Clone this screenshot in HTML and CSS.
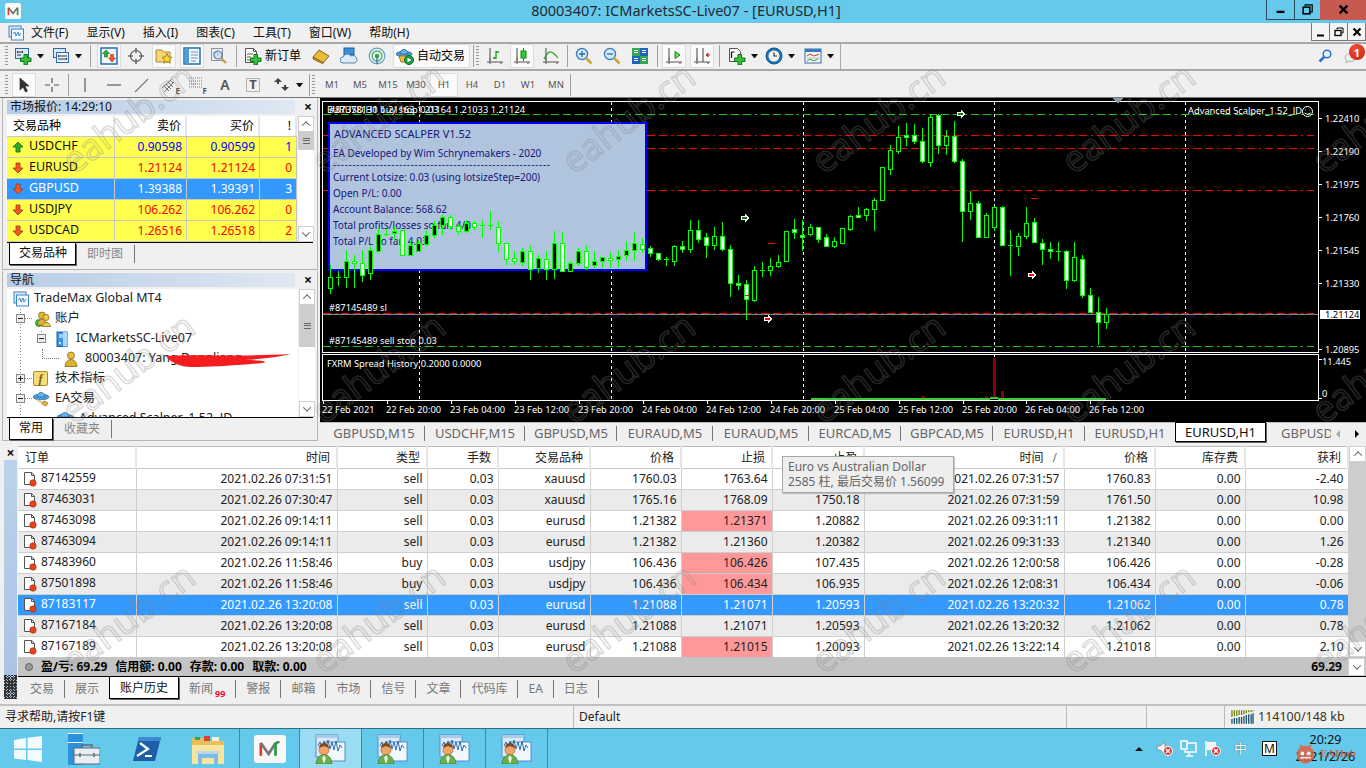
FILE: index.html
```html
<!DOCTYPE html>
<html lang="zh-CN">
<head>
<meta charset="utf-8">
<title>80003407: ICMarketsSC-Live07 - [EURUSD,H1]</title>
<link rel="stylesheet" href="styles.css">
</head>
<body>
<svg class="defs" aria-hidden="true">
  <symbol id="plus" viewBox="0 0 18 18"><path d="M10 7.5h3.5V11H17v3.500h-3.500V18H10v-3.500H6.500V11H10z" fill="#38c238" stroke="#0c7418"/></symbol>
  <symbol id="i-newchart" viewBox="0 0 18 18"><rect x="1.500" y="1.500" width="13" height="10" fill="#dce9f8" stroke="#2b6cb0"/><path d="M3 5h6M3 8h4M3 5l1-1M3 5l1 1M9 5L8 4M9 5L8 6" stroke="#334" fill="none"/><use href="#plus"/></symbol>
  <symbol id="i-profiles" viewBox="0 0 18 18"><rect x="1.500" y="1.500" width="12" height="9" fill="#dce9f8" stroke="#2b6cb0"/><rect x="4.500" y="5.500" width="12" height="10" fill="#e9f2fb" stroke="#2b6cb0"/><path d="M6 9h9M6 12h9M6 9l1-1M6 9l1 1M15 12l-1-1M15 12l-1 1" stroke="#334" fill="none"/></symbol>
  <symbol id="i-mw" viewBox="0 0 18 18"><rect x="1" y="1" width="16" height="16" fill="#eef5fc" stroke="#1f6fb8" stroke-width="1.500"/><path d="M6 3l3.500 3.500H7.500V10h-3V6.500H2.500z" fill="#33b033" stroke="#0b6b0b" stroke-width=".6"/><path d="M10.500 7.500h3V11h2L12 15l-3.500-4h2z" fill="#f25a2a" stroke="#a83008" stroke-width=".6"/></symbol>
  <symbol id="i-cross" viewBox="0 0 18 18"><circle cx="9" cy="9" r="5.500" fill="none" stroke="#555" stroke-width="1.200"/><path d="M9 1v5M9 12v5M1 9h5M12 9h5" stroke="#444" stroke-width="1.200"/></symbol>
  <symbol id="i-fav" viewBox="0 0 18 18"><path d="M1 3h6l1.500 2H15v10H1z" fill="#f6d873" stroke="#b08a2a"/><path d="M12 6.500l1.600 3.400 3.400.4-2.500 2.400.7 3.500-3.200-1.800-3.200 1.800.7-3.500L7 10.300l3.400-.4z" fill="#fbd640" stroke="#a9801b"/></symbol>
  <symbol id="i-nav" viewBox="0 0 18 18"><rect x="1" y="1" width="16" height="16" fill="#f4f9ff" stroke="#1f6fb8" stroke-width="1.500"/><rect x="2" y="2" width="4" height="14" fill="#4f9be0"/><path d="M8 5h7M8 8h7M8 11h7M8 14h5" stroke="#6b8db3"/></symbol>
  <symbol id="i-look" viewBox="0 0 18 18"><rect x="1.500" y="1.500" width="11" height="12" fill="#eef1f5" stroke="#8b94a0"/><path d="M3 6h3l1-2 1 5 1-3h2" stroke="#6384a8" fill="none"/><circle cx="8" cy="8" r="4" fill="#cfe3f6" fill-opacity=".7" stroke="#5a7ea8" stroke-width="1.200"/><path d="M11 11l5 5" stroke="#c79a3a" stroke-width="2.200"/></symbol>
  <symbol id="i-order" viewBox="0 0 18 18"><path d="M1.500 1.500h8l3 3v11h-11z" fill="#fff" stroke="#555"/><path d="M9.500 1.500v3h3M3 7h6M3 10h4M3 13h3" stroke="#555" fill="none"/><use href="#plus"/></symbol>
  <symbol id="i-book" viewBox="0 0 18 18"><path d="M1 10L7 3l10 6-6 7z" fill="#e8bb3a" stroke="#8a6212"/><path d="M1 10v2l10 5v-1.500z" fill="#c08a22" stroke="#8a6212" stroke-width=".7"/></symbol>
  <symbol id="i-people" viewBox="0 0 18 18"><rect x="4" y="1" width="10" height="7" fill="#3d8fdb" stroke="#1d5f9e"/><path d="M4 8h10v3H4z" fill="#7fb9ec" stroke="#1d5f9e" stroke-width=".7"/><path d="M3 16a3 3 0 010-6 4.500 4.500 0 018-1 3.500 3.500 0 014 7z" fill="#dceaf5" stroke="#5a86ad"/></symbol>
  <symbol id="i-signal" viewBox="0 0 18 18"><circle cx="9" cy="9" r="7.800" fill="#e8f2ee" stroke="#6ea0c8" stroke-width="1.200"/><circle cx="9" cy="9" r="5" fill="none" stroke="#58b06a" stroke-width="1.300"/><circle cx="9" cy="9" r="2.300" fill="#3da45a"/><path d="M9 9v8" stroke="#3d7fb8" stroke-width="1.500"/></symbol>
  <symbol id="i-auto" viewBox="0 0 18 18"><ellipse cx="8" cy="7" rx="8" ry="2.500" fill="#4f9fdc" stroke="#2a6ba3"/><path d="M4 7a4 4.500 0 018 0z" fill="#6db5e8" stroke="#2a6ba3"/><path d="M3 9h9l-2 6H5z" fill="#eec04c" stroke="#a37b1c"/><circle cx="13" cy="13" r="4.500" fill="#1f9c3f" stroke="#0c6a24"/><path d="M11.500 10.800l4 2.200-4 2.200z" fill="#fff"/></symbol>
  <symbol id="i-bar" viewBox="0 0 18 18"><path d="M4 1v14M1 15h16" stroke="#555" stroke-width="1.100" fill="none"/><path d="M3 12h2M15 15v2M4 15v2" stroke="#555"/><path d="M10 4v8M10 5h3M10 11H7" stroke="#0da00d" stroke-width="1.300" fill="none"/></symbol>
  <symbol id="i-candle" viewBox="0 0 18 18"><path d="M4 1v14M1 15h16" stroke="#555" stroke-width="1.100" fill="none"/><path d="M3 12h2M15 15v2M4 15v2" stroke="#555"/><path d="M10.500 1v13" stroke="#0a8a0a"/><rect x="8" y="4" width="5" height="7" fill="#2ecc2e" stroke="#0a8a0a"/></symbol>
  <symbol id="i-line" viewBox="0 0 18 18"><path d="M4 1v14M1 15h16" stroke="#555" stroke-width="1.100" fill="none"/><path d="M3 12h2M15 15v2M4 15v2" stroke="#555"/><path d="M2 12q4-8 7-7t7 6" stroke="#18a018" stroke-width="1.100" fill="none"/></symbol>
  <symbol id="i-zoomin" viewBox="0 0 18 18"><circle cx="7" cy="7" r="5.500" fill="#d7ebfb" stroke="#3d7fc0" stroke-width="1.400"/><path d="M4 7h6M7 4v6" stroke="#2a68a8" stroke-width="1.300"/><path d="M11 11l5.500 5.500" stroke="#cfa23a" stroke-width="2.500"/></symbol>
  <symbol id="i-zoomout" viewBox="0 0 18 18"><circle cx="7" cy="7" r="5.500" fill="#d7ebfb" stroke="#3d7fc0" stroke-width="1.400"/><path d="M4 7h6" stroke="#2a68a8" stroke-width="1.300"/><path d="M11 11l5.500 5.500" stroke="#cfa23a" stroke-width="2.500"/></symbol>
  <symbol id="i-tile" viewBox="0 0 18 18"><rect x="1" y="1" width="8" height="8" fill="#34a853"/><rect x="9" y="1" width="8" height="8" fill="#1f62c4"/><rect x="1" y="9" width="8" height="8" fill="#1f62c4"/><rect x="9" y="9" width="8" height="8" fill="#34a853"/><path d="M3 3.500h4M3 5.500h4M11 3.500h4M11 5.500h4M3 11.500h4M3 13.500h4M11 11.500h4M11 13.500h4" stroke="#fff"/></symbol>
  <symbol id="i-scroll" viewBox="0 0 18 18"><path d="M4 1v14M1 15h16" stroke="#555" stroke-width="1.100" fill="none"/><path d="M3 12h2M15 15v2M4 15v2" stroke="#555"/><path d="M10 4.500l5 3.500-5 3.500z" fill="#6ed86e" stroke="#0a8a0a"/></symbol>
  <symbol id="i-shift" viewBox="0 0 18 18"><path d="M4 1v14M1 15h16M10 1v14" stroke="#555" stroke-width="1.100" fill="none"/><path d="M3 12h2M15 15v2M4 15v2" stroke="#555"/><path d="M17 8h-4M13 8l2-2v4z" stroke="#c33" fill="#c33"/></symbol>
  <symbol id="i-templ" viewBox="0 0 18 18"><path d="M1.500 1.500h8l3 3v10h-11z" fill="#f6f6f6" stroke="#555"/><path d="M3.500 5h3M3.500 5v6" stroke="#111" stroke-width="1.200"/><use href="#plus"/></symbol>
  <symbol id="i-clock" viewBox="0 0 18 18"><circle cx="9" cy="9" r="8" fill="#1c74bb" stroke="#0e4f88"/><circle cx="9" cy="9" r="5.500" fill="#f6f3e6"/><path d="M9 5.500V9h3" stroke="#333" stroke-width="1.200" fill="none"/></symbol>
  <symbol id="i-tpl" viewBox="0 0 18 18"><rect x="1" y="2" width="16" height="14" fill="#f2f4f7" stroke="#3a6ea5"/><rect x="1" y="2" width="16" height="3" fill="#3a78bd"/><path d="M3 9q3-3 5-1t7-1" stroke="#c33" fill="none"/><path d="M3 14q3-3 5-1t7-2" stroke="#2a9a2a" fill="none"/><path d="M3 11h12" stroke="#bbb"/></symbol>
  <symbol id="i-arrow" viewBox="0 0 18 18"><path d="M5 2v12l3-3 2.500 5 2-1-2.500-5h4z" fill="#333" stroke="#222" stroke-width=".6"/></symbol>
  <symbol id="i-crosshair" viewBox="0 0 18 18"><path d="M9 2v5M9 11v5M2 9h5M11 9h5" stroke="#555" stroke-width="1.200"/></symbol>
  <symbol id="i-vline" viewBox="0 0 18 18"><path d="M9 2v14" stroke="#666" stroke-width="1.300"/></symbol>
  <symbol id="i-hline" viewBox="0 0 18 18"><path d="M2 9h14" stroke="#666" stroke-width="1.300"/></symbol>
  <symbol id="i-dline" viewBox="0 0 18 18"><path d="M3 16L16 3" stroke="#777" stroke-width="1.100"/></symbol>
  <symbol id="i-chan" viewBox="0 0 18 18"><path d="M1 12L11 3M3 16L13 6M3 10l5 5M5 8l5 5M7 6l5 5M9 4l3 3" stroke="#666" stroke-width=".9"/></symbol>
  <symbol id="i-fib" viewBox="0 0 18 18"><path d="M1 2h13M1 5h13M1 8h13M1 11h13" stroke="#777" stroke-dasharray="1 1"/></symbol>
  <symbol id="i-tbox" viewBox="0 0 18 18"><rect x="2.500" y="2.500" width="13" height="13" fill="none" stroke="#777" stroke-dasharray="1 1"/></symbol>
  <symbol id="i-shapes" viewBox="0 0 18 18"><path d="M1 6l4-4 4 4H6v2H4V6zM8 11h3V9h2v2h3l-4 4z" fill="#444"/></symbol>
  <symbol id="i-up" viewBox="0 0 12 12"><path d="M6 1l5 5H8v5H4V6H1z" fill="#2fa82f" stroke="#0b6b0b" stroke-width=".8"/></symbol>
  <symbol id="i-down" viewBox="0 0 12 12"><path d="M4 1h4v5h3l-5 5-5-5h3z" fill="#f25a2a" stroke="#a83008" stroke-width=".8"/></symbol>
  <symbol id="i-doc" viewBox="0 0 14 16"><path d="M1.500 1.500h7l3 3v9h-10z" fill="#fff" stroke="#555"/><path d="M8.500 1.500v3h3" fill="none" stroke="#555"/><circle cx="10" cy="12" r="3.200" fill="#e8431a" stroke="#a12b0a" stroke-width=".6"/></symbol>
  <symbol id="i-root" viewBox="0 0 16 16"><rect x="1" y="1" width="12" height="11" fill="#d8e8fa" stroke="#3d86c8"/><rect x="3.500" y="4" width="12" height="11" fill="#f4f9ff" stroke="#3d86c8"/><path d="M5 9l2-2 1 4 2-4 1 4 2-3" stroke="#3d86c8" fill="none"/></symbol>
  <symbol id="i-users" viewBox="0 0 18 16"><circle cx="6" cy="12" r="3.500" fill="#3bbf3b" stroke="#0c7a18" stroke-width=".7"/><circle cx="9" cy="4.500" r="3.500" fill="#e4b536" stroke="#8b6a12" stroke-width=".8"/><path d="M4.500 14a4.500 5.500 0 019 0z" fill="#e4b536" stroke="#8b6a12" stroke-width=".8"/><circle cx="13" cy="6.500" r="3" fill="#f0c84a" stroke="#8b6a12" stroke-width=".8"/><path d="M9 15.500a4.500 6 0 018.500 0z" fill="#f0c84a" stroke="#8b6a12" stroke-width=".8"/></symbol>
  <symbol id="i-server" viewBox="0 0 14 16"><rect x="2" y="1" width="10" height="14.500" fill="#3a96e0" stroke="#18609e"/><path d="M4 4h6M4 6h6" stroke="#fff"/><rect x="8" y="1" width="4" height="14.500" fill="#a8d8f8"/><circle cx="5" cy="12" r="1" fill="#fff"/></symbol>
  <symbol id="i-user" viewBox="0 0 14 16"><circle cx="7" cy="4.500" r="3.500" fill="#e9bc3e" stroke="#8b6a12" stroke-width=".8"/><path d="M1 15.500a6 7 0 0112 0z" fill="#e0b030" stroke="#8b6a12" stroke-width=".8"/></symbol>
  <symbol id="i-hat" viewBox="0 0 18 16"><ellipse cx="8" cy="6" rx="8" ry="2.800" fill="#4f9fdc" stroke="#2a6ba3" stroke-width=".8"/><path d="M4 6a4 4.500 0 018 0z" fill="#6db5e8" stroke="#2a6ba3" stroke-width=".8"/><path d="M4 8l6 3-1 2-5-3z" fill="#e2c874"/><path d="M11 10l4 2-2 3-4-2z" fill="#e8bb3a" stroke="#8a6212" stroke-width=".7"/></symbol>
  <symbol id="i-mark" viewBox="0 0 8 8"><path d="M.5 2.500h3.500V.5L7.500 4 4 7.500V5.500H.5z" stroke="#fff"/></symbol>
  <symbol id="i-task" viewBox="0 0 31 30"><rect x="1" y="1" width="22" height="22" fill="#dbe9f7" stroke="#4f8fc8"/><rect x="1" y="1" width="22" height="3" fill="#a9cbea"/><rect x="10" y="8" width="20" height="19" fill="#f1f7fd" stroke="#4f8fc8"/><path d="M3 12l2-4 2 6 2-7 2 8 2-9 2 9 2-7 2 8 2-9 2 10 2-6 2 3" stroke="#2d6db0" fill="none"/><circle cx="9" cy="16" r="5" fill="#f0a46b" stroke="#b06a30" stroke-width=".7"/><path d="M4 14a5 5 0 0110 0l-5-2z" fill="#7a4a1c"/><path d="M1 30a8 9.500 0 0116 0z" fill="#6ab04a" stroke="#3a7a22" stroke-width=".7"/><path d="M9 21l-2 3 2 6 2-6z" fill="#e8f0e0"/></symbol>
</svg>

<header class="titlebar">
  <div class="app-logo"><svg class="logo-m" viewBox="0 0 14 12"><path d="M1.500 11V2" stroke="#d9402e" stroke-width="2" fill="none"/><path d="M1.500 2L7 9l5.500-7" stroke="#6a6a6a" stroke-width="2" fill="none"/><path d="M12.500 2v9" stroke="#2a9a4a" stroke-width="2" fill="none"/></svg></div>
  <h1 class="title">80003407: ICMarketsSC-Live07 - [EURUSD,H1]</h1>
  <div class="winctl">
    <div class="wc wc-min"><svg class="wc-i" viewBox="0 0 14 14"><path d="M2 10h10" stroke="#000" stroke-width="3"/></svg></div>
    <div class="wc wc-res"><svg class="wc-i" viewBox="0 0 14 14"><path d="M4 3V1h9v9h-3" stroke="#000" stroke-width="1.500" fill="none"/><rect x="1.500" y="4" width="8.500" height="8.500" fill="none" stroke="#000" stroke-width="2"/></svg></div>
    <div class="wc wc-close"><svg class="wc-i" viewBox="0 0 14 14"><path d="M2 2l10 10M12 2L2 12" stroke="#000" stroke-width="3"/></svg></div>
  </div>
</header>

<nav class="menubar">
  <svg class="menu-ico"><use href="#i-root"/></svg>
  <span class="menu">文件(F)</span><span class="menu">显示(V)</span><span class="menu">插入(I)</span><span class="menu">图表(C)</span><span class="menu">工具(T)</span><span class="menu">窗口(W)</span><span class="menu">帮助(H)</span>
  <div class="mdi">
    <div class="mdi-b"><svg class="mdi-i" viewBox="0 0 10 10"><path d="M1 8.500h7" stroke="#000" stroke-width="2"/></svg></div>
    <div class="mdi-b"><svg class="mdi-i" viewBox="0 0 10 10"><path d="M3 2.500V1h6v5H7.500" stroke="#000" fill="none"/><rect x="1" y="3.500" width="6" height="5" fill="none" stroke="#000" stroke-width="1.300"/></svg></div>
    <div class="mdi-b"><svg class="mdi-i" viewBox="0 0 10 10"><path d="M1.500 1.500l7 7M8.500 1.500l-7 7" stroke="#000" stroke-width="2"/></svg></div>
  </div>
</nav>

<div class="toolbar tb1">
  <div class="tb-group">
  <span class="grip ml5"></span>
  <span class="btn ml3"><svg class="ico"><use href="#i-newchart"/></svg></span><span class="caret"></span>
  <span class="btn ml4"><svg class="ico"><use href="#i-profiles"/></svg></span><span class="caret"></span>
  <span class="sep ml7"></span>
  <span class="btn on ml6"><svg class="ico"><use href="#i-mw"/></svg></span>
  <span class="btn ml3"><svg class="ico"><use href="#i-cross"/></svg></span>
  <span class="btn on ml4"><svg class="ico"><use href="#i-fav"/></svg></span>
  <span class="btn on ml4"><svg class="ico"><use href="#i-nav"/></svg></span>
  <span class="btn ml3"><svg class="ico"><use href="#i-look"/></svg></span>
  <span class="sep ml5"></span>
  <span class="btn ml4"><svg class="ico"><use href="#i-order"/></svg></span><span class="btn-text">新订单</span>
  <span class="btn ml8"><svg class="ico"><use href="#i-book"/></svg></span>
  <span class="btn ml4"><svg class="ico"><use href="#i-people"/></svg></span>
  <span class="btn ml4"><svg class="ico"><use href="#i-signal"/></svg></span>
  <span class="btn on auto ml4"><svg class="ico"><use href="#i-auto"/></svg><span class="auto-t">自动交易</span></span>
  <span class="sep ml3"></span>
  <span class="grip ml2"></span>
  <span class="btn ml4"><svg class="ico"><use href="#i-bar"/></svg></span>
  <span class="btn on ml3"><svg class="ico"><use href="#i-candle"/></svg></span>
  <span class="btn ml5"><svg class="ico"><use href="#i-line"/></svg></span>
  <span class="sep ml4"></span>
  <span class="btn ml4"><svg class="ico"><use href="#i-zoomin"/></svg></span>
  <span class="btn ml4"><svg class="ico"><use href="#i-zoomout"/></svg></span>
  <span class="btn ml4"><svg class="ico"><use href="#i-tile"/></svg></span>
  <span class="sep ml5"></span>
  <span class="btn on ml4"><svg class="ico"><use href="#i-scroll"/></svg></span>
  <span class="btn on ml4"><svg class="ico"><use href="#i-shift"/></svg></span>
  <span class="sep ml5"></span>
  <span class="btn ml5"><svg class="ico"><use href="#i-templ"/></svg></span><span class="caret"></span>
  <span class="btn ml3"><svg class="ico"><use href="#i-clock"/></svg></span><span class="caret"></span>
  <span class="btn ml5"><svg class="ico"><use href="#i-tpl"/></svg></span><span class="caret"></span>
  </div>
  <div class="tb-right">
    <svg class="search" viewBox="0 0 14 14"><circle cx="9" cy="5" r="3.800" fill="#e8f2fc" stroke="#2a6fd0" stroke-width="1.500"/><path d="M6 8l-4.500 4.500" stroke="#2a6fd0" stroke-width="2.500"/></svg>
    <div class="chat"><svg class="chat-b" viewBox="0 0 14 12"><path d="M1 5a6 4.500 0 0112 0 6 4.500 0 01-8 4l-3 2 1-3a4 4 0 01-2-3z" fill="#eee" stroke="#aaa"/></svg><span class="badge">1</span></div>
  </div>
</div>

<div class="toolbar tb2">
  <span class="grip ml5"></span>
  <span class="btn on ml4"><svg class="ico"><use href="#i-arrow"/></svg></span>
  <span class="btn ml4"><svg class="ico"><use href="#i-crosshair"/></svg></span>
  <span class="sep ml4"></span>
  <span class="btn ml4"><svg class="ico"><use href="#i-vline"/></svg></span>
  <span class="btn ml5"><svg class="ico"><use href="#i-hline"/></svg></span>
  <span class="btn ml3"><svg class="ico"><use href="#i-dline"/></svg></span>
  <span class="btn tag ml5"><svg class="ico"><use href="#i-chan"/></svg><span class="tag-t">E</span></span>
  <span class="btn tag ml3"><svg class="ico"><use href="#i-fib"/></svg><span class="tag-t">F</span></span>
  <span class="btn glyph ml4">A</span>
  <span class="btn tbox ml4"><svg class="ico"><use href="#i-tbox"/></svg><span class="tbox-t">T</span></span>
  <span class="btn ml5"><svg class="ico"><use href="#i-shapes"/></svg></span><span class="caret"></span>
  <span class="sep ml5"></span>
  <span class="grip ml2"></span>
  <span class="per ml3">M1</span><span class="per">M5</span><span class="per">M15</span><span class="per">M30</span><span class="per on">H1</span><span class="per">H4</span><span class="per">D1</span><span class="per">W1</span><span class="per">MN</span>
  <span class="sep"></span>
</div>

<main class="workspace">
  <aside class="side">
    <section class="panel mw">
      <div class="panel-title"><span>市场报价: 14:29:10</span><span class="pclose">×</span></div>
      <div class="mw-body">
        <div class="mw-table">
          <div class="mw-row mw-head"><span class="c-name">交易品种</span><span>卖价</span><span>买价</span><span>!</span></div>
          <div class="mw-row up"><span class="c-name"><svg class="arr"><use href="#i-up"/></svg>USDCHF</span><span>0.90598</span><span>0.90599</span><span>1</span></div>
          <div class="mw-row dn"><span class="c-name"><svg class="arr"><use href="#i-down"/></svg>EURUSD</span><span>1.21124</span><span>1.21124</span><span>0</span></div>
          <div class="mw-row sel"><span class="c-name"><svg class="arr"><use href="#i-down"/></svg>GBPUSD</span><span>1.39388</span><span>1.39391</span><span>3</span></div>
          <div class="mw-row dn"><span class="c-name"><svg class="arr"><use href="#i-down"/></svg>USDJPY</span><span>106.262</span><span>106.262</span><span>0</span></div>
          <div class="mw-row dn"><span class="c-name"><svg class="arr"><use href="#i-down"/></svg>USDCAD</span><span>1.26516</span><span>1.26518</span><span>2</span></div>
        </div>
        <div class="sbar"><span class="sb-btn"><i class="chev up-c"></i></span><span class="sb-thumb s-mw"><i class="lines"></i></span><span class="sb-fill"></span><span class="sb-btn"><i class="chev"></i></span></div>
      </div>
      <div class="ptabs"><span class="ptab active t-wide">交易品种</span><span class="ptab">即时图</span></div>
    </section>
    <section class="panel nav">
      <div class="panel-title"><span>导航</span><span class="pclose">×</span></div>
      <div class="nav-body">
        <div class="tree">
          <div class="node l0"><svg class="ni"><use href="#i-root"/></svg><span>TradeMax Global MT4</span></div>
          <div class="node l1"><i class="exp minus"></i><i class="dots"></i><svg class="ni ni-w"><use href="#i-users"/></svg><span>账户</span></div>
          <div class="node l2"><i class="exp minus"></i><svg class="ni ni-s"><use href="#i-server"/></svg><span>ICMarketsSC-Live07</span></div>
          <div class="node l3"><i class="elbow"></i><svg class="ni ni-s"><use href="#i-user"/></svg><span class="acct">80003407: Yang Dongliang</span></div>
          <div class="node l1"><i class="exp pl"></i><i class="dots"></i><span class="f-ico">f</span><span>技术指标</span></div>
          <div class="node l1"><i class="exp minus"></i><i class="dots"></i><svg class="ni ni-w"><use href="#i-hat"/></svg><span>EA交易</span></div>
          <div class="node l2b"><svg class="ni ni-w"><use href="#i-hat"/></svg><span>Advanced Scalper_1.52_JD</span></div>
          <svg class="scribble" viewBox="0 0 130 14"><path d="M2 2C30 0 60 3 127 0 110 4 95 5 80 6c20 0 25 2 18 3-30 3-55 4-70 4C15 13 6 8 2 2z" fill="#f41c1c"/></svg>
        </div>
        <div class="sbar"><span class="sb-btn"><i class="chev up-c"></i></span><span class="sb-thumb s-nav"><i class="lines"></i></span><span class="sb-fill"></span><span class="sb-btn"><i class="chev"></i></span></div>
      </div>
      <div class="ptabs"><span class="ptab active t-nav">常用</span><span class="ptab">收藏夹</span></div>
    </section>
  </aside>

  <div class="chart-area">
    <svg class="chart" viewBox="320 98 1046 324">
      <rect x="320" y="98" width="1046" height="324" fill="#000"/>
      <path class="frame" d="M322.500 352V101.500H1318.500V352zM322.500 354.500H1318.500V400.500H322.500z"/>
      <path class="vgrid" d="M419.500 102V400M611.500 102V400M803.500 102V400M994.500 102V400M1185.500 102V400"/>
      <path class="gline" d="M323 114.500H1314M323 346.500H1314"/>
      <path class="rline" d="M323 135.500H1314M323 148.500H1314M323 190.500H1314M323 313.500H1314"/>
      <path class="price" d="M323 314.500H1318"/>
      <path class="tri" d="M1113 98h10l-5 6z"/>

      <rect class="ea-box" x="329" y="123" width="317" height="147"/>
      <text class="ea ea-t" x="334" y="138">ADVANCED SCALPER V1.52</text>
      <text class="ea" x="333" y="157">EA Developed by Wim Schrynemakers - 2020</text>
      <text class="ea" x="333" y="168" textLength="217">--------------------------------------------------------</text>
      <text class="ea" x="333" y="181">Current Lotsize: 0.03 (using lotsizeStep=200)</text>
      <text class="ea" x="333" y="197">Open P/L: 0.00</text>
      <text class="ea" x="333" y="213">Account Balance: 568.62</text>
      <text class="ea" x="333" y="229">Total profits/losses so far: 4/0</text>
      <text class="ea" x="333" y="245">Total P/L so far: 4.03</text>

      <path class="wick" d="M330.500 265V294M338.500 271V286M346.500 250V288M354.500 255V288M362.500 250V282M370.500 246V280M378.500 228V253M386.500 229V236M394.500 226V241M402.500 230V255M410.500 241V256M418.500 240V252M426.500 230V246M434.500 221V238M442.500 215V235M450.500 215V230M458.500 224V235M466.500 220V233M474.500 221V230M482.500 220V238M490.500 211V230M498.500 221V252M506.500 243V265M514.500 251V265M522.500 248V266M530.500 245V280M538.500 255V273M546.500 251V280M554.500 231V279M562.500 232V272M570.500 261V271M578.500 248V266M586.500 245V270M594.500 251V268M602.500 257V268M610.500 252V268M618.500 250V268M626.500 241V261M634.500 232V261M642.500 238V253M650.500 246V257M658.500 253V261M666.500 257V266M674.500 245V266M682.500 241V253M690.500 220V253M698.500 220V243M706.500 233V258M714.500 227V250M722.500 222V251M730.500 245V297M738.500 275V290M746.500 280V320M754.500 266V302M762.500 262V277M770.500 258V276M778.500 255V268M786.500 231V261M794.500 219V239M802.500 220V251M810.500 224V236M818.500 227V243M826.500 234V247M834.500 237V248M842.500 228V243M850.500 215V231M858.500 207V217M866.500 208V221M874.500 198V231M882.500 167V200M890.500 145V175M898.500 126V154M906.500 123V146M914.500 124V144M922.500 128V163M930.500 114V167M938.500 114V154M946.500 130V155M954.500 121V163M962.500 159V242M970.500 191V220M978.500 201V237M986.500 213V237M994.500 206V231M1002.500 206V245M1010.500 230V276M1018.500 233V256M1026.500 207V239M1034.500 218V243M1042.500 239V265M1050.500 242V259M1058.500 242V261M1066.500 250V289M1074.500 242V282M1082.500 255V298M1090.500 288V312M1098.500 297V345M1106.500 308V329M336 277.500h5M384 234.500h5M480 225.500h5M488 225.500h5M664 259.500h5M760 270.500h5M1008 245.500h5M1056 251.500h5"/>
      <path class="body-b" d="M328.500 277.500h4v11h-4zM344.500 261.500h4v16h-4zM368.500 250.500h4v23h-4zM376.500 234.500h4v17h-4zM392.500 231.500h4v2h-4zM408.500 245.500h4v10h-4zM416.500 243.500h4v8h-4zM424.500 235.500h4v9h-4zM432.500 225.500h4v10h-4zM440.500 217.500h4v8h-4zM464.500 223.500h4v8h-4zM520.500 251.500h4v11h-4zM536.500 258.500h4v10h-4zM552.500 243.500h4v26h-4zM568.500 263.500h4v8h-4zM576.500 251.500h4v12h-4zM592.500 261.500h4v4h-4zM600.500 257.500h4v4h-4zM616.500 256.500h4v3h-4zM624.500 250.500h4v5h-4zM632.500 243.500h4v7h-4zM672.500 246.500h4v15h-4zM688.500 230.500h4v19h-4zM712.500 236.500h4v9h-4zM752.500 270.500h4v30h-4zM768.500 266.500h4v4h-4zM776.500 262.500h4v4h-4zM784.500 231.500h4v30h-4zM808.500 227.500h4v7h-4zM832.500 241.500h4v5h-4zM840.500 228.500h4v15h-4zM848.500 216.500h4v13h-4zM864.500 209.500h4v6h-4zM872.500 200.500h4v9h-4zM880.500 167.500h4v33h-4zM888.500 150.500h4v19h-4zM896.500 137.500h4v14h-4zM928.500 117.500h4v45h-4zM944.500 136.500h4v9h-4zM968.500 203.500h4v8h-4zM984.500 215.500h4v22h-4zM992.500 207.500h4v20h-4zM1016.500 236.500h4v10h-4zM1024.500 223.500h4v13h-4zM1072.500 257.500h4v23h-4zM1104.500 314.500h4v8h-4z"/>
      <path class="body-w" d="M352.500 261.500h4v2h-4zM360.500 263.500h4v12h-4zM400.500 230.500h4v25h-4zM448.500 217.500h4v9h-4zM456.500 226.500h4v5h-4zM472.500 223.500h4v4h-4zM496.500 227.500h4v16h-4zM504.500 243.500h4v16h-4zM512.500 258.500h4v3h-4zM528.500 251.500h4v18h-4zM544.500 259.500h4v10h-4zM560.500 243.500h4v28h-4zM584.500 251.500h4v16h-4zM608.500 258.500h4v2h-4zM640.500 244.500h4v5h-4zM648.500 248.500h4v5h-4zM656.500 253.500h4v6h-4zM680.500 246.500h4v3h-4zM696.500 230.500h4v9h-4zM704.500 237.500h4v8h-4zM720.500 236.500h4v13h-4zM728.500 249.500h4v34h-4zM736.500 283.500h4v2h-4zM744.500 284.500h4v15h-4zM792.500 229.500h4v3h-4zM800.500 235.500h4v2h-4zM816.500 227.500h4v12h-4zM824.500 237.500h4v9h-4zM856.500 215.500h4v2h-4zM904.500 135.500h4v2h-4zM912.500 135.500h4v6h-4zM920.500 141.500h4v20h-4zM936.500 115.500h4v30h-4zM952.500 136.500h4v25h-4zM960.500 161.500h4v50h-4zM976.500 203.500h4v34h-4zM1000.500 207.500h4v38h-4zM1032.500 222.500h4v20h-4zM1040.500 243.500h4v6h-4zM1048.500 249.500h4v2h-4zM1064.500 251.500h4v29h-4zM1080.500 259.500h4v36h-4zM1088.500 295.500h4v17h-4zM1096.500 312.500h4v10h-4z"/>
      <path class="rdash" d="M768 243.500h7M1031 198.500h7M745 295.500h5"/>
      <use class="mk-g" href="#i-mark" x="741" y="214" width="8" height="8"/>
      <use class="mk-g" href="#i-mark" x="957" y="110" width="8" height="8"/>
      <use class="mk-r" href="#i-mark" x="764" y="315" width="8" height="8"/>
      <use class="mk-r" href="#i-mark" x="1028" y="271" width="8" height="8"/>

      <text class="t" x="327" y="113">EURUSD,H1 1.21163 1.21164 1.21033 1.21124</text>
      <text class="t" x="329" y="113">#87378130 buy stop 0.03</text>
      <text class="t" x="329" y="311">#87145489 sl</text>
      <text class="t" x="329" y="344">#87145489 sell stop 0.03</text>
      <text class="t" x="327" y="367">FXRM Spread History 0.2000 0.0000</text>
      <text class="t" x="1188" y="114">Advanced Scalper_1.52_JD</text>
      <g class="smile"><circle cx="1307.500" cy="111.500" r="5"/><path d="M1305 110h.5M1309.500 110h.5M1304.500 113q3 2.500 6 0"/></g>

      <path class="bars" d="M994.500 358V398M1002.500 391V398M923.500 396V398M986.500 396V398"/>
      <path class="spread" d="M811 399H989Q994 396 999 399H1106"/>

      <path class="ticks" d="M1319 118.500h3M1319 151.500h3M1319 184.500h3M1319 217.500h3M1319 250.500h3M1319 283.500h3M1319 349.500h3M1319 359.500h3M1319 398.500h3M323.500 401v3M387.500 401v3M451.500 401v3M515.500 401v3M579.500 401v3M643.500 401v3M707.500 401v3M771.500 401v3M835.500 401v3M899.500 401v3M963.500 401v3M1026.500 401v3M1090.500 401v3"/>
      <text class="t" x="1325" y="122">1.22410</text>
      <text class="t" x="1325" y="155">1.22190</text>
      <text class="t" x="1325" y="188">1.21975</text>
      <text class="t" x="1325" y="221">1.21760</text>
      <text class="t" x="1325" y="254">1.21545</text>
      <text class="t" x="1325" y="287">1.21330</text>
      <rect x="1320" y="310" width="40" height="9" fill="#fff"/>
      <text class="t tk" x="1325" y="318">1.21124</text>
      <text class="t" x="1325" y="353">1.20895</text>
      <text class="t" x="1322" y="365">11.445</text>
      <text class="t" x="1322" y="397">0</text>
      <text class="t" x="322" y="413">22 Feb 2021</text>
      <text class="t" x="386" y="413">22 Feb 20:00</text>
      <text class="t" x="450" y="413">23 Feb 04:00</text>
      <text class="t" x="514" y="413">23 Feb 12:00</text>
      <text class="t" x="578" y="413">23 Feb 20:00</text>
      <text class="t" x="642" y="413">24 Feb 04:00</text>
      <text class="t" x="706" y="413">24 Feb 12:00</text>
      <text class="t" x="770" y="413">24 Feb 20:00</text>
      <text class="t" x="834" y="413">25 Feb 04:00</text>
      <text class="t" x="898" y="413">25 Feb 12:00</text>
      <text class="t" x="962" y="413">25 Feb 20:00</text>
      <text class="t" x="1025" y="413">26 Feb 04:00</text>
      <text class="t" x="1089" y="413">26 Feb 12:00</text>
    </svg>
    <div class="ctabs">
      <span class="ctab">GBPUSD,M15</span><span class="ctab">USDCHF,M15</span><span class="ctab">GBPUSD,M5</span><span class="ctab">EURAUD,M5</span><span class="ctab">EURAUD,M5</span><span class="ctab">EURCAD,M5</span><span class="ctab">GBPCAD,M5</span><span class="ctab">EURUSD,H1</span><span class="ctab nob">EURUSD,H1</span><span class="ctab active">EURUSD,H1</span><span class="ctab crop">GBPUSD, M15</span>
      <span class="tab-nav"><i class="tri-l"></i><i class="tri-r"></i></span>
    </div>
  </div>
</main>

<section class="terminal">
  <div class="term-strip">
    <span class="pclose tx">×</span>
    <span class="vbar"><span class="vgrip"></span></span>
  </div>
  <div class="term-main">
    <div class="term-grid">
      <table class="orders">
        <colgroup><col class="w1"><col class="w2"><col class="w3"><col class="w4"><col class="w3b"><col class="w5"><col class="w5"><col class="w3b"><col class="w6"><col class="w5"><col class="w3c"><col class="w7"></colgroup>
        <thead><tr><th class="left">订单</th><th>时间</th><th>类型</th><th>手数</th><th>交易品种</th><th>价格</th><th>止损</th><th>止盈</th><th>时间 <i class="sort">/</i></th><th>价格</th><th>库存费</th><th>获利</th></tr></thead>
        <tbody>
        <tr><td class="left"><svg class="doc"><use href="#i-doc"/></svg>87142559</td><td>2021.02.26 07:31:51</td><td>sell</td><td>0.03</td><td>xauusd</td><td>1760.03</td><td>1763.64</td><td>1745.03</td><td>2021.02.26 07:31:57</td><td>1760.83</td><td>0.00</td><td>-2.40</td></tr>
        <tr><td class="left"><svg class="doc"><use href="#i-doc"/></svg>87463031</td><td>2021.02.26 07:30:47</td><td>sell</td><td>0.03</td><td>xauusd</td><td>1765.16</td><td>1768.09</td><td>1750.18</td><td>2021.02.26 07:31:59</td><td>1761.50</td><td>0.00</td><td>10.98</td></tr>
        <tr><td class="left"><svg class="doc"><use href="#i-doc"/></svg>87463098</td><td>2021.02.26 09:14:11</td><td>sell</td><td>0.03</td><td>eurusd</td><td>1.21382</td><td class="hit">1.21371</td><td>1.20882</td><td>2021.02.26 09:31:11</td><td>1.21382</td><td>0.00</td><td>0.00</td></tr>
        <tr><td class="left"><svg class="doc"><use href="#i-doc"/></svg>87463094</td><td>2021.02.26 09:14:11</td><td>sell</td><td>0.03</td><td>eurusd</td><td>1.21382</td><td>1.21360</td><td>1.20382</td><td>2021.02.26 09:31:33</td><td>1.21340</td><td>0.00</td><td>1.26</td></tr>
        <tr><td class="left"><svg class="doc"><use href="#i-doc"/></svg>87483960</td><td>2021.02.26 11:58:46</td><td>buy</td><td>0.03</td><td>usdjpy</td><td>106.436</td><td class="hit">106.426</td><td>107.435</td><td>2021.02.26 12:00:58</td><td>106.426</td><td>0.00</td><td>-0.28</td></tr>
        <tr><td class="left"><svg class="doc"><use href="#i-doc"/></svg>87501898</td><td>2021.02.26 11:58:46</td><td>buy</td><td>0.03</td><td>usdjpy</td><td>106.436</td><td class="hit">106.434</td><td>106.935</td><td>2021.02.26 12:08:31</td><td>106.434</td><td>0.00</td><td>-0.06</td></tr>
        <tr class="selected"><td class="left"><svg class="doc"><use href="#i-doc"/></svg>87183117</td><td>2021.02.26 13:20:08</td><td>sell</td><td>0.03</td><td>eurusd</td><td>1.21088</td><td>1.21071</td><td>1.20593</td><td>2021.02.26 13:20:32</td><td>1.21062</td><td>0.00</td><td>0.78</td></tr>
        <tr><td class="left"><svg class="doc"><use href="#i-doc"/></svg>87167184</td><td>2021.02.26 13:20:08</td><td>sell</td><td>0.03</td><td>eurusd</td><td>1.21088</td><td>1.21071</td><td>1.20593</td><td>2021.02.26 13:20:32</td><td>1.21062</td><td>0.00</td><td>0.78</td></tr>
        <tr><td class="left"><svg class="doc"><use href="#i-doc"/></svg>87167189</td><td>2021.02.26 13:20:08</td><td>sell</td><td>0.03</td><td>eurusd</td><td>1.21088</td><td class="hit">1.21015</td><td>1.20093</td><td>2021.02.26 13:22:14</td><td>1.21018</td><td>0.00</td><td>2.10</td></tr>
        </tbody>
      </table>
      <div class="sbar t-sb"><span class="sb-btn"><i class="chev up-c"></i></span><span class="sb-thumb s-term"></span><span class="sb-btn"><i class="chev"></i></span></div>
    </div>
    <div class="summary">
      <div class="sum-l"><i class="sum-dot"></i><b>盈/亏: 69.29</b><b>信用额: 0.00</b><b>存款: 0.00</b><b>取款: 0.00</b></div>
      <b class="sum-r">69.29</b>
      <span class="sb-btn sum-b"><i class="chev"></i></span>
    </div>
    <div class="ttabs">
      <span class="ttab">交易</span><span class="ttab nob">展示</span><span class="ttab active">账户历史</span><span class="ttab">新闻<sub class="news">99</sub></span><span class="ttab">警报</span><span class="ttab">邮箱</span><span class="ttab">市场</span><span class="ttab">信号</span><span class="ttab">文章</span><span class="ttab">代码库</span><span class="ttab">EA</span><span class="ttab">日志</span>
    </div>
  </div>
  <div class="tooltip"><div>Euro vs Australian Dollar</div><div>2585 柱, 最后交易价 1.56099</div></div>
</section>

<footer class="statusbar">
  <span class="st st-help">寻求帮助,请按F1键</span>
  <span class="st st-def">Default</span>
  <span class="st st-a"></span>
  <span class="st st-b"></span>
  <span class="st st-conn"><svg class="conn" viewBox="0 0 24 14"><path class="c-o" d="M1 0v7M3.500 0v6M6 0v6M8.500 0v5M11 0v5M13.500 0v4M16 0v3M18.500 0v2M21 0v2M23 0v1"/><path class="c-b" d="M1 9v5M3.500 8v6M6 8v6M8.500 7v7M11 7v7M13.500 6v8M16 5v9M18.500 4v10M21 4v10M23 3v11"/></svg>114100/148 kb</span>
</footer>

<footer class="taskbar">
  <div class="tk tk-win"><svg class="win" viewBox="0 0 28 26"><path d="M0 4l12-2v10.500H0zM13.500 1.800L28 0v12.500H13.500zM0 14h12v10L0 22.500zM13.500 14H28v12l-14.500-2z" fill="#fff" fill-opacity=".92"/></svg></div>
  <div class="tk tk-srv"><svg class="srv" viewBox="0 0 33 32"><rect x="1" y="0" width="15" height="32" fill="#fff"/><rect x="1" y="1" width="15" height="8" fill="#2a93dc"/><rect x="1" y="10" width="15" height="22" fill="#2a93dc"/><rect x="7" y="15" width="26" height="16" fill="#eaeef2" stroke="#5b6b78"/><path d="M15 15v-3h10v3" fill="none" stroke="#5b6b78" stroke-width="1.500"/><path d="M7 22h26" stroke="#5b6b78"/><path d="M13 20v4M27 20v4" stroke="#5b6b78" stroke-width="1.500"/></svg></div>
  <div class="tk tk-ps"><svg class="ps" viewBox="0 0 28 26"><path d="M6 1h22l-6 24H0z" fill="#1f5fa8"/><path d="M6 1h22l-1 4H5z" fill="#3f8ad0"/><path d="M7 7l8 6-11 7" fill="none" stroke="#fff" stroke-width="2.200"/><path d="M12 20h7" stroke="#fff" stroke-width="2"/></svg></div>
  <div class="tk tk-exp"><svg class="exp-i" viewBox="0 0 32 30"><path d="M0 4h11l2 3h19v23H0z" fill="#e9bf5a"/><rect x="3" y="3" width="5" height="3" fill="#2fa84a"/><rect x="12" y="2" width="6" height="5" fill="#d8442f"/><rect x="20" y="3" width="7" height="4" fill="#f4f0dc"/><path d="M0 11h32v19H0z" fill="#f8e6a0"/><path d="M6 20h20v10h-4v-6H10v6H6z" fill="#7fb9e8"/><path d="M4 17h24v3H4z" fill="#bcd9ef"/></svg></div>
  <div class="tk tk-mt"><div class="mt-tile"><svg class="mt-m" viewBox="0 0 24 16"><path d="M2 16V2" stroke="#d9402e" stroke-width="3" fill="none"/><path d="M2 2l8.500 12L18 2" stroke="#777" stroke-width="3" fill="none"/><path d="M18 16V3L22 0" stroke="#2a9a4a" stroke-width="3" fill="none"/></svg></div></div>
  <div class="tk tk-t active"><svg class="task"><use href="#i-task"/></svg></div>
  <div class="tk tk-t"><svg class="task"><use href="#i-task"/></svg></div>
  <div class="tk tk-t"><svg class="task"><use href="#i-task"/></svg></div>
  <div class="tk tk-t"><svg class="task"><use href="#i-task"/></svg></div>
  <div class="tray">
    <i class="tray-up"></i>
    <svg class="ti" viewBox="0 0 17 17"><path d="M1 6h3l5-4v12l-5-4H1z" fill="#f4f4f4" stroke="#777" stroke-width=".7"/><circle cx="12" cy="11" r="4.500" fill="#e23a3a" stroke="#fff"/><path d="M10 9l4 4M14 9l-4 4" stroke="#fff" stroke-width="1.400"/></svg>
    <svg class="ti" viewBox="0 0 17 17"><rect x="5" y="3" width="11" height="9" fill="#65c9eb" stroke="#fff" stroke-width="1.500"/><rect x="1" y="1" width="6" height="8" fill="#65c9eb" stroke="#fff" stroke-width="1.500"/><path d="M9 13v3M6 16h7" stroke="#fff" stroke-width="1.500"/></svg>
    <svg class="ti" viewBox="0 0 17 17"><path d="M2 1v15" stroke="#fff" stroke-width="1.500"/><path d="M3 2h9v8H3z" fill="#f4f4f4"/><circle cx="12" cy="11" r="4.500" fill="#e23a3a" stroke="#fff"/><path d="M10 9l4 4M14 9l-4 4" stroke="#fff" stroke-width="1.400"/></svg>
    <span class="ime">中</span>
    <span class="ime-m">M</span>
    <div class="clock"><span>20:29</span><span>2021/2/26</span></div>
  </div>
</footer>

<div class="eahub"><svg class="eah-i" viewBox="0 0 20 20"><circle cx="10" cy="11" r="8.500" fill="#e2603f"/><path d="M5 2l3 3M15 2l-3 3" stroke="#e2603f" stroke-width="2"/><circle cx="7" cy="10" r="2" fill="#fff"/><circle cx="13" cy="10" r="2" fill="#fff"/><path d="M5 14h10" stroke="#fff" stroke-width="1.500"/></svg><span>EAHub</span></div>

<div class="watermark" aria-hidden="true">
  <span>eahub.cn</span><span>eahub.cn</span><span>eahub.cn</span><span>eahub.cn</span><span>eahub.cn</span><span>eahub.cn</span>
  <span>eahub.cn</span><span>eahub.cn</span><span>eahub.cn</span><span>eahub.cn</span><span>eahub.cn</span><span>eahub.cn</span>
  <span>eahub.cn</span><span>eahub.cn</span><span>eahub.cn</span><span>eahub.cn</span><span>eahub.cn</span><span>eahub.cn</span>
</div>
</body>
</html>
```

FILE: styles.css
```css
* { box-sizing: border-box; }
html, body { margin: 0; padding: 0; }
body {
  position: relative;
  width: 1366px;
  height: 768px;
  overflow: hidden;
  background: #f0f0f0;
  color: #000;
  font-family: "Noto Sans", "Noto Sans CJK SC", sans-serif;
  font-size: 12px;
  line-height: 1;
}
.defs { position: absolute; width: 0; height: 0; }
svg { display: block; }

/* title bar */
.titlebar {
  height: 23px;
  background: #65c9eb;
  display: flex;
  align-items: flex-start;
  position: relative;
}
.app-logo {
  width: 16px; height: 16px; margin: 3px 0 0 5px;
  background: #fbfbfb; border-radius: 2px;
  display: flex; align-items: center; justify-content: center;
}
.logo-m { width: 12px; height: 10px; }
.title {
  margin: 0; position: absolute; left: 0; right: 0; top: 3px;
  text-align: center; font-size: 14.500px; font-weight: 400; color: #1c2b33; padding-left: 6px;
}
.winctl { margin-left: auto; display: flex; height: 20px; }
.wc { border: 1px solid #2c4a58; border-top: 0; display: flex; align-items: center; justify-content: center; margin-left: -1px; }
.wc-min { width: 29px; }
.wc-res { width: 27px; }
.wc-close { width: 46px; background: #c75a50; border-color: #c75a50; }
.wc-i { width: 11px; height: 11px; }

/* menu */
.menubar {
  height: 21px;
  background: #f0f0f0;
  border-bottom: 2px solid #a8a8a8;
  display: flex; align-items: center;
  padding-left: 8px;
}
.menu-ico { width: 16px; height: 16px; margin-right: 7px; }
.menu { margin-right: 18px; color: #111; white-space: nowrap; }
.mdi { margin-left: auto; display: flex; align-self: flex-start; height: 18px; }
.mdi-b { width: 19px; border: 1px solid #777; border-top: 0; margin-left: -1px; display: flex; align-items: center; justify-content: center; background: #f4f4f4; }
.mdi-i { width: 10px; height: 10px; }

/* toolbars */
.toolbar { background: #f0f0f0; display: flex; align-items: center; }
.tb1 { height: 27px; border-bottom: 2px solid #a8a8a8; padding-bottom: 1px; justify-content: space-between; }
.tb2 { height: 26px; padding-top: 1px; }
.tb-group { display: flex; align-items: center; height: 26px; width: 841px; border-right: 1px solid #aaa; }
.tb-right { display: flex; align-items: center; }
.ml2 { margin-left: 2px; } .ml3 { margin-left: 3px; } .ml4 { margin-left: 4px; } .ml5 { margin-left: 5px; }
.ml6 { margin-left: 6px; } .ml7 { margin-left: 7px; } .ml8 { margin-left: 8px; }
.grip { width: 3px; height: 20px; background: repeating-linear-gradient(#999 0 1px, transparent 1px 3px); }
.sep { width: 1px; height: 22px; background: #a0a0a0; }
.btn { width: 24px; height: 24px; flex: none; display: flex; align-items: center; justify-content: center; position: relative; }
.btn.on, .per.on { background: #fafafa; box-shadow: inset 0 0 0 1px #dcdcdc; }
.ico { width: 18px; height: 18px; }
.caret { width: 10px; height: 0; flex: none; border-left: 3.500px solid transparent; border-right: 3.500px solid transparent; border-top: 4px solid #111; background-clip: padding-box; width: 7px; margin: 0 1.500px; }
.btn-text { width: 36px; font-size: 12px; flex: none; white-space: nowrap; }
.auto { width: 77px; justify-content: flex-start; padding-left: 3px; gap: 3px; }
.auto-t { white-space: nowrap; }
.tag .tag-t { position: absolute; right: 2px; bottom: 2px; font-size: 8px; font-weight: 700; color: #555; }
.glyph { font-size: 14px; font-weight: 600; color: #555; }
.tbox-t { position: absolute; inset: 0; display: flex; align-items: center; justify-content: center; font-size: 13px; font-weight: 700; color: #555; }
.per { width: 28px; height: 24px; flex: none; display: flex; align-items: center; justify-content: center; font-size: 9.500px; color: #555; }
.search { width: 14px; height: 14px; margin-right: 12px; }
.chat { position: relative; width: 20px; height: 20px; margin-right: 2px; }
.chat-b { width: 13px; height: 11px; position: absolute; left: 0; top: 7px; }
.badge { position: absolute; left: 5px; top: -2px; width: 16px; height: 16px; border-radius: 50%; background: radial-gradient(circle at 40% 30%, #f05030, #c81e10); color: #fff; font-size: 11px; font-weight: 700; display: flex; align-items: center; justify-content: center; }

/* workspace */
.workspace { height: 347px; display: flex; border-top: 1px solid #777; }
.side { width: 320px; flex: none; padding: 0 2px; display: flex; flex-direction: column; }
.panel { border: 1px solid #b4b4b4; border-top: 0; padding: 2px 4px 0; display: flex; flex-direction: column; }
.mw { height: 172px; }
.nav { height: 170px; margin-top: 1px; }
.panel-title {
  height: 13.500px; margin-right: 13px; margin-bottom: 2px; padding-left: 3px; margin-right: 0;
  background: linear-gradient(90deg, #b8cce4, #dfe8f2 94%, #f0f0f0 94%);
  display: flex; align-items: center; justify-content: space-between; flex: none; color: #111;
}
.pclose { font-weight: 700; font-size: 14px; color: #111; padding-right: 1px; }
.mw-body { display: flex; height: 126px; }
.mw-table { width: 290px; flex: none; }
.mw-row { display: grid; grid-template-columns: 108px 72px 73px 37px; height: 21px; background: #ffff4d; border-bottom: 1px solid #c8c8c8; }
.mw-row > span { display: flex; align-items: center; justify-content: flex-end; padding-right: 4px; border-right: 1px solid #c8c8c8; white-space: nowrap; }
.mw-row > .c-name { justify-content: flex-start; padding-left: 3px; font-size: 12.500px; }
.mw-head { background: #fff; height: 21px; }
.mw-head > span { border-right: 2px solid #e6e6e6; }
.mw-head > .c-name { padding-left: 6px; font-size: 12px; }
.up { color: #0000ff; }
.up .c-name, .dn .c-name { color: #111; }
.dn { color: #ff0000; }
.sel { background: #3399ff; color: #fff; }
.arr { width: 12px; height: 12px; margin: 0 5px 0 2px; flex: none; }
.sbar { width: 16px; flex: none; display: flex; flex-direction: column; background: #fff; margin-left: 1px; }
.sb-btn { height: 16px; flex: none; background: #fff; border: 1px solid #d0d0d0; display: flex; align-items: center; justify-content: center; }
.sb-thumb { background: #cdcdcd; flex: none; display: flex; align-items: center; justify-content: center; }
.s-mw { height: 18px; }
.s-nav { height: 42px; }
.s-term { flex: 1; }
.sb-fill { flex: 1; }
.chev { width: 6px; height: 6px; border-right: 1.200px solid #606060; border-bottom: 1.200px solid #606060; transform: rotate(45deg) translate(-1px, -1px); }
.chev.up-c { transform: rotate(225deg) translate(-1px, -1px); }
.lines { width: 7px; height: 6px; background: repeating-linear-gradient(#666 0 1px, transparent 1px 2.500px); }
.ptabs { flex: 1; border-top: 1px solid #000; display: flex; align-items: flex-start; padding-left: 2px; }
.ptab { height: 22px; padding: 0 11px 0 11px; display: flex; align-items: center; color: #888; border-right: 1px solid #777; margin-top: 0; white-space: nowrap; }
.ptabs .ptab:last-child { height: 18px; margin-top: 2px; }
.ptab.active { background: #fff; color: #111; border: 1px solid #000; border-top: 0; box-shadow: 1px 1px 0 #666; }
.t-wide { width: 67px; padding: 0 9px; }
.t-nav { width: 44px; padding: 0 9px; }

.nav-body { display: flex; height: 128px; }
.tree {
  width: 291px; flex: none; background-color: #fff; position: relative; overflow: hidden;
  background-image:
    repeating-linear-gradient(#888 0 1px, transparent 1px 3px),
    repeating-linear-gradient(#888 0 1px, transparent 1px 3px);
  background-repeat: no-repeat;
  background-position: 13px 20px, 34px 42px;
  background-size: 1px 110px, 1px 6px;
}
.node { height: 20px; display: flex; align-items: center; white-space: nowrap; color: #222; font-size: 12.500px; }
.l0 { padding-left: 6px; }
.l1 { padding-left: 9px; }
.l2 { padding-left: 30px; }
.l2b { padding-left: 50px; }
.l3 { padding-left: 35px; }
.ni { width: 15px; height: 15px; margin-right: 6px; flex: none; }
.l0 .ni { width: 16px; height: 16px; margin-right: 5px; }
.ni-w { width: 18px; height: 16px; margin-right: 4px; margin-left: 0; }
.ni-s { width: 14px; height: 16px; margin-right: 7px; margin-left: 9px; }
.l3 .ni-s { margin-left: 0; }
.exp { width: 9px; height: 9px; border: 1px solid #888; background: #eee; flex: none; position: relative; }
.exp::before { content: ""; position: absolute; left: 1px; right: 1px; top: 3px; height: 1px; background: #222; }
.pl::after { content: ""; position: absolute; top: 1px; bottom: 1px; left: 3px; width: 1px; background: #222; }
.dots { width: 8px; height: 1px; background: repeating-linear-gradient(90deg, #888 0 1px, transparent 1px 2px); flex: none; }
.elbow { width: 17px; height: 10px; margin-top: -10px; border-bottom: 1px dotted #777; border-left: 1px dotted #777; margin-right: 5px; flex: none; }
.f-ico { width: 15px; height: 15px; margin-right: 7px; flex: none; background: #f6dc7a; border: 1px solid #a98a24; border-radius: 2px; display: flex; align-items: center; justify-content: center; font-family: "Liberation Serif", serif; font-style: italic; font-weight: 700; color: #7a5c10; font-size: 12px; }
.scribble { position: absolute; left: 157px; top: 65px; width: 130px; height: 14px; }

/* chart */
.chart-area { flex: 1; display: flex; flex-direction: column; min-width: 0; }
.chart { width: 1046px; height: 324px; flex: none; shape-rendering: crispEdges; }
.chart text { font-family: "Noto Sans", sans-serif; font-size: 9.300px; fill: #fff; shape-rendering: auto; }
.chart .ea { fill: #16167a; font-size: 10px; }
.chart .ea-t { font-size: 11px; }
.chart .tk { fill: #000; }
.frame { fill: none; stroke: #fff; }
.vgrid { fill: none; stroke: #fff; stroke-dasharray: 3 3; }
.gline { fill: none; stroke: #1fc81f; stroke-dasharray: 8 4 2 4 8 4 8 4; }
.rline { fill: none; stroke: #f00; stroke-dasharray: 8 4 2 4 8 4 8 4; }
.price { fill: none; stroke: #778899; }
.tri { fill: #8899aa; }
.ea-box { fill: #b0c4de; stroke: #0000ff; stroke-width: 2; }
.wick { fill: none; stroke: #00ff00; }
.body-b { fill: #000; stroke: #00ff00; }
.body-w { fill: #fff; stroke: #00ff00; }
.rdash { fill: none; stroke: #f00; }
.mk-g { fill: #0a7a0a; }
.mk-r { fill: #f00; }
.smile { fill: none; stroke: #fff; shape-rendering: auto; }
.bars { fill: none; stroke: #8b0000; stroke-width: 2.500; }
.spread { fill: none; stroke: #32cd32; stroke-width: 2; }
.ticks { fill: none; stroke: #fff; }

.ctabs { height: 22px; background: #f0f0f0; display: grid; grid-template-columns: 3px 102px 100px 92px 96px 96px 92px 92px 92px 90px 91px 65px 1fr; align-items: stretch; font-size: 13px; color: #666; border-top: 1px solid #bbb; }
.ctabs::before { content: ""; }
.ctab { display: flex; align-items: center; justify-content: center; white-space: nowrap; overflow: hidden; position: relative; }
.ctab::after { content: ""; position: absolute; right: 0; top: 3px; bottom: 3px; width: 1px; background: #777; }
.ctab.nob::after, .ctab.active::after, .ctab.crop::after { display: none; }
.ctab.active { background: #fff; color: #111; border: 1px solid #000; border-top-width: 1px; box-shadow: 1px 1px 0 #666; height: 20px; margin-top: -1px; }
.ctab.crop { justify-content: flex-start; padding-left: 15px; }
.tab-nav { display: flex; align-items: center; justify-content: space-between; padding: 0 7px 0 5px; }
.tri-l { border-right: 4px solid #aaa; border-top: 4px solid transparent; border-bottom: 4px solid transparent; }
.tri-r { border-left: 4px solid #000; border-top: 4px solid transparent; border-bottom: 4px solid transparent; }

/* terminal */
.terminal { height: 260px; display: flex; position: relative; margin-top: 0; padding-top: 2px; }
.term-strip { width: 18px; flex: none; display: flex; flex-direction: column; padding-left: 4px; }
.tx { height: 13px; display: flex; align-items: center; justify-content: center; width: 13px; padding: 0; margin-top: 0; }
.vbar { flex: 1; width: 13px; margin-top: 1px; background: linear-gradient(#bcd2ec, #a9c3e3); display: flex; flex-direction: column; justify-content: flex-end; margin-bottom: 5px; }
.vgrip { height: 24px; background: repeating-linear-gradient(45deg, #333 0 1px, transparent 1px 2px), repeating-linear-gradient(-45deg, #333 0 1px, transparent 1px 2px); }
.term-main { flex: 1; display: flex; flex-direction: column; min-width: 0; }
.term-grid { height: 211px; display: flex; background: #fff; }
.orders { table-layout: fixed; width: 1330px; height: 211px; border-collapse: collapse; font-size: 12px; color: #222; flex: none; }
.w1 { width: 118px; } .w2 { width: 201px; } .w3 { width: 90px; } .w3b { width: 92px; } .w3c { width: 90px; }
.w4 { width: 71px; } .w5 { width: 91px; } .w6 { width: 200px; } .w7 { width: 103px; }
.orders th { height: 22px; font-weight: 400; text-align: right; padding: 0 6px 0 0; background: #fff; border-right: 2px solid #e6e6e6; border-bottom: 1px solid #c8c8c8; border-top: 1px solid #bbb; white-space: nowrap; }
.orders th.left { text-align: left; padding-left: 7px; }
.orders td { height: 21px; padding: 0 4px 0 0; text-align: right; border-right: 1px solid #cfcfcf; border-bottom: 1px solid #cfcfcf; white-space: nowrap; }
.orders td.left { text-align: left; padding-left: 5px; }
.orders tbody tr:nth-child(even) { background: #ebebeb; }
.orders td.hit { background: #ff9999; }
.orders tr.selected, .orders tbody tr.selected { background: #3399ff; color: #fff; }
.doc { width: 14px; height: 16px; display: inline-block; vertical-align: middle; margin-right: 4px; }
.sort { font-style: normal; color: #777; margin-left: 6px; }
.t-sb { width: 17px; margin-left: 0; background: #f0f0f0; }
.summary { height: 20px; flex: none; background: #c4c4c4; border-bottom: 1px solid #000; display: flex; align-items: center; position: relative; font-size: 12px; }
.sum-l { display: flex; align-items: center; gap: 8px; padding-left: 23px; position: relative; }
.sum-dot { position: absolute; left: 7px; width: 8px; height: 8px; border-radius: 50%; background: #999; border: 1px solid #666; }
.sum-r { margin-left: auto; margin-right: 6px; }
.sum-b { width: 17px; height: 18px; margin-right: 1px; }
.ttabs { flex: 1; display: flex; align-items: flex-start; padding-left: 2px; color: #777; font-size: 12px; }
.ttab { height: 18px; margin-top: 3px; padding: 0 10px; display: flex; align-items: center; border-right: 1px solid #777; white-space: nowrap; }
.ttab.nob { border-right: 0; }
.ttab.active { height: 22px; margin-top: 0; background: #fff; color: #111; border: 1px solid #000; border-top: 0; box-shadow: 1px 1px 0 #666; }
.news { color: #f03; font-size: 9px; font-weight: 700; margin-left: 2px; align-self: flex-end; }
.tooltip { position: absolute; left: 782px; top: 12px; width: 172px; height: 37px; background: #eeeeee; border: 1px solid #a8a8a8; color: #666; padding: 4px 5px; font-size: 12px; display: flex; flex-direction: column; gap: 3px; white-space: nowrap; box-shadow: 1px 1px 1px rgba(0,0,0,.2); }

/* status */
.statusbar { height: 24px; border-top: 2px solid #c0c0c0; background: #f0f0f0; display: flex; align-items: center; font-size: 12px; color: #222; margin-top: 0; }
.st { height: 100%; display: flex; align-items: center; white-space: nowrap; border-right: 1px solid #bbb; flex: none; }
.st-help { width: 574px; padding-left: 5px; }
.st-def { width: 493px; padding-left: 5px; }
.st-a { width: 80px; }
.st-b { width: 78px; }
.st-conn { border-right: 0; padding-left: 6px; font-size: 12.500px; color: #3c3418; gap: 4px; }
.conn { width: 23px; height: 14px; }
.c-o { fill: none; stroke: #6c7c00; stroke-width: 1.300; }
.c-b { fill: none; stroke: #0e4668; stroke-width: 1.300; }

/* taskbar */
.taskbar { height: 40px; background: #65c9eb; border-top: 1px solid #2f6e86; display: flex; align-items: stretch; }
.tk { display: flex; align-items: center; justify-content: center; flex: none; }
.tk-win { width: 56px; }
.tk-srv { width: 55px; }
.tk-ps { width: 71px; }
.tk-exp { width: 58px; border-right: 1px solid #3d8aa6; }
.tk-mt { width: 60px; border-right: 1px solid #3d8aa6; }
.tk-t { width: 62px; border-right: 1px solid #3d8aa6; }
.tk-t.active { background: #9adcf2; }
.win { width: 28px; height: 26px; }
.srv { width: 33px; height: 32px; }
.ps { width: 28px; height: 26px; }
.exp-i { width: 32px; height: 30px; margin-right: 6px; }
.mt-tile { width: 32px; height: 28px; background: #f8f8f8; border-radius: 3px; display: flex; align-items: center; justify-content: center; }
.mt-m { width: 22px; height: 15px; }
.task { width: 31px; height: 30px; }
.tray { margin-left: auto; display: flex; align-items: center; color: #111; padding-right: 12px; }
.tray-up { width: 0; height: 0; border-left: 4px solid transparent; border-right: 4px solid transparent; border-bottom: 4px solid #111; margin-right: 13px; }
.ti { width: 17px; height: 17px; margin-right: 7px; }
.ime { margin: 0 15px 0 6px; font-size: 13px; color: #fff; text-shadow: 0 0 1px #333; }
.ime-m { width: 15px; height: 15px; background: #fff; border: 1px solid #111; font-size: 12px; display: flex; align-items: center; justify-content: center; margin-right: 20px; }
.clock { display: flex; flex-direction: column; align-items: center; gap: 5px; font-size: 12.500px; width: 57px; }

.eahub { position: absolute; left: 1295px; top: 743px; display: flex; align-items: center; gap: 4px; color: rgba(214, 80, 50, .75); font-family: "Liberation Serif", serif; font-size: 11px; font-weight: 700; pointer-events: none; }
.eah-i { width: 21px; height: 21px; opacity: .85; }

/* watermark */
.watermark {
  position: absolute; left: 3px; top: -7px; width: 1500px; height: 750px;
  display: grid; grid-template-columns: repeat(6, 250px); grid-auto-rows: 250px;
  pointer-events: none;
}
.watermark span {
  display: flex; align-items: center; justify-content: center;
  transform: rotate(-37deg);
  font-family: "Open Sans", sans-serif; font-size: 36px; font-weight: 400;
  color: transparent;
  -webkit-text-stroke: 1.500px rgba(130, 130, 130, .3);
}
```
